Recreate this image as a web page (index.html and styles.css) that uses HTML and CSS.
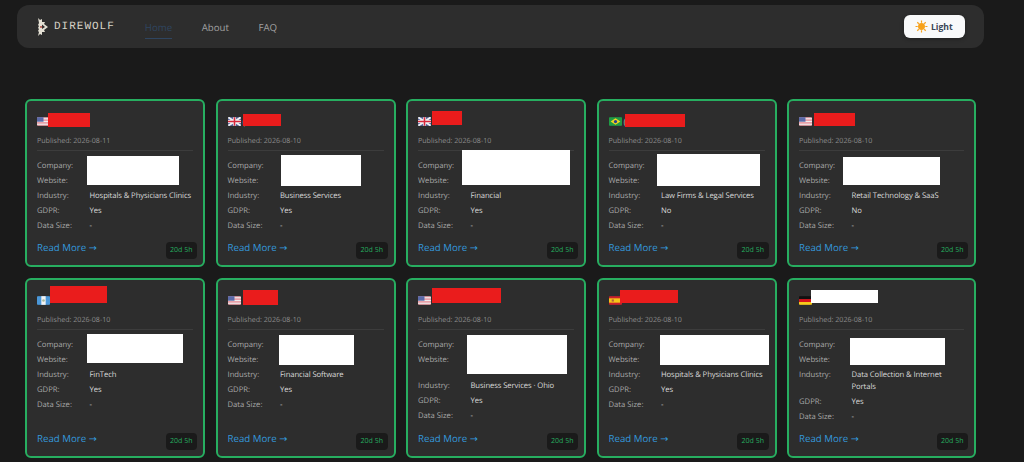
FILE: index.html
```html
<!DOCTYPE html>
<html lang="en">
<head>
  <meta charset="UTF-8">
  <meta name="viewport" content="width=device-width, initial-scale=1.0">
  <title>Direwolf</title>
  <link rel="stylesheet" href="styles.css">
</head>
<body>

  <!-- flags, reused by every card -->
  <svg class="defs" aria-hidden="true">
    <symbol id="flag-us" viewBox="0 0 12 8">
      <rect width="12" height="8" fill="#e8a0a8"/>
      <path d="M0 1.5h12M0 4h12M0 6.5h12" stroke="#eee" stroke-width="1"/>
      <rect width="6" height="4.2" fill="#5a6aa8"/>
    </symbol>
    <symbol id="flag-gb" viewBox="0 0 12 8">
      <rect width="12" height="8" fill="#5a6aa0"/>
      <path d="M0 0l12 8M12 0L0 8" stroke="#f2f2f2" stroke-width="1.8"/>
      <path d="M6 0v8M0 4h12" stroke="#f2f2f2" stroke-width="2.6"/>
      <path d="M6 0v8M0 4h12" stroke="#d8283c" stroke-width="1.4"/>
    </symbol>
    <symbol id="flag-br" viewBox="0 0 12 8">
      <rect width="12" height="8" fill="#1f9a45"/>
      <path d="M6 1l4.5 3L6 7 1.500 4z" fill="#f4d21f"/>
      <circle cx="6" cy="4" r="1.500" fill="#26408f"/>
    </symbol>
    <symbol id="flag-gt" viewBox="0 0 12 8">
      <rect width="12" height="8" fill="#4a97d8"/>
      <rect x="4" width="4" height="8" fill="#f2f2f2"/>
      <circle cx="6" cy="4" r="1.200" fill="#a8b89a"/>
    </symbol>
    <symbol id="flag-es" viewBox="0 0 12 8">
      <rect width="12" height="8" fill="#c8202c"/>
      <rect y="2" width="12" height="4" fill="#f5c518"/>
      <rect x="2.500" y="3" width="2" height="2" fill="#b5603a"/>
    </symbol>
    <symbol id="flag-de" viewBox="0 0 12 8">
      <rect width="12" height="2.700" fill="#111"/>
      <rect y="2.700" width="12" height="2.700" fill="#d8141c"/>
      <rect y="5.400" width="12" height="2.600" fill="#f7cc1c"/>
    </symbol>
  </svg>

  <nav class="navbar">
    <a href="#none" class="brand">
      <svg class="brand-mark" viewBox="0 0 11 18" aria-hidden="true">
        <path d="M1 0l2 2 2-1 0 3 3 0-1 2 4 3-4 3 1 2-3 0 0 3-2-1-2 2 1-4-1-1 1-2-1-1 1-2-1-1 1-2z" fill="#e4e0d4"/>
        <path d="M5 6.500l3 2.500-3 2z" fill="#2d2d2d"/>
        <rect x="3" y="8.200" width="2.200" height="1.500" fill="#b0483f"/>
      </svg>
      <span>DIREWOLF</span>
    </a>
    <ul class="nav-links">
      <li><a href="#none" class="nav-link active">Home</a></li>
      <li><a href="#none" class="nav-link">About</a></li>
      <li><a href="#none" class="nav-link">FAQ</a></li>
    </ul>
    <button type="button" class="theme-toggle">
      <svg class="sun" viewBox="0 0 12 12" aria-hidden="true">
        <circle cx="6" cy="6" r="3.200" fill="#f7a21b"/>
        <path d="M6 .5v2M6 9.500v2M.5 6h2M9.500 6h2M2.100 2.100l1.400 1.400M8.500 8.500l1.400 1.400M2.100 9.900l1.400-1.400M8.500 3.500l1.400-1.400" stroke="#f7a21b" stroke-width="1.100"/>
      </svg>
      Light
    </button>
  </nav>

  <main class="card-grid">

    <article class="card">
      <h2 class="card-title"><svg class="flag"><use href="#flag-us"/></svg></h2>
      <p class="published">Published: 2026-08-11</p>
      <div class="info-row"><span class="info-label">Company:</span></div>
      <div class="info-row"><span class="info-label">Website:</span></div>
      <div class="info-row"><span class="info-label">Industry:</span><span class="info-value">Hospitals &amp; Physicians Clinics</span></div>
      <div class="info-row"><span class="info-label">GDPR:</span><span class="info-value">Yes</span></div>
      <div class="info-row"><span class="info-label">Data Size:</span><span class="info-value">-</span></div>
      <a href="#none" class="read-more">Read More →</a>
      <span class="timer">20d 5h</span>
      <div class="redact red name-a1"></div>
      <div class="redact info-a1"></div>
    </article>

    <article class="card">
      <h2 class="card-title"><svg class="flag"><use href="#flag-gb"/></svg>(</h2>
      <p class="published">Published: 2026-08-10</p>
      <div class="info-row"><span class="info-label">Company:</span></div>
      <div class="info-row"><span class="info-label">Website:</span></div>
      <div class="info-row"><span class="info-label">Industry:</span><span class="info-value">Business Services</span></div>
      <div class="info-row"><span class="info-label">GDPR:</span><span class="info-value">Yes</span></div>
      <div class="info-row"><span class="info-label">Data Size:</span><span class="info-value">-</span></div>
      <a href="#none" class="read-more">Read More →</a>
      <span class="timer">20d 5h</span>
      <div class="redact red name-a2"></div>
      <div class="redact info-a2"></div>
    </article>

    <article class="card">
      <h2 class="card-title"><svg class="flag"><use href="#flag-gb"/></svg></h2>
      <p class="published">Published: 2026-08-10</p>
      <div class="info-row"><span class="info-label">Company:</span></div>
      <div class="info-row"><span class="info-label">Website:</span></div>
      <div class="info-row"><span class="info-label">Industry:</span><span class="info-value">Financial</span></div>
      <div class="info-row"><span class="info-label">GDPR:</span><span class="info-value">Yes</span></div>
      <div class="info-row"><span class="info-label">Data Size:</span><span class="info-value">-</span></div>
      <a href="#none" class="read-more">Read More →</a>
      <span class="timer">20d 5h</span>
      <div class="redact red name-a3"></div>
      <div class="redact info-a3"></div>
    </article>

    <article class="card">
      <h2 class="card-title"><svg class="flag"><use href="#flag-br"/></svg>(</h2>
      <p class="published">Published: 2026-08-10</p>
      <div class="info-row"><span class="info-label">Company:</span></div>
      <div class="info-row"><span class="info-label">Website:</span></div>
      <div class="info-row"><span class="info-label">Industry:</span><span class="info-value">Law Firms &amp; Legal Services</span></div>
      <div class="info-row"><span class="info-label">GDPR:</span><span class="info-value">No</span></div>
      <div class="info-row"><span class="info-label">Data Size:</span><span class="info-value">-</span></div>
      <a href="#none" class="read-more">Read More →</a>
      <span class="timer">20d 5h</span>
      <div class="redact red name-a4"></div>
      <div class="redact info-a4"></div>
    </article>

    <article class="card">
      <h2 class="card-title"><svg class="flag"><use href="#flag-us"/></svg></h2>
      <p class="published">Published: 2026-08-10</p>
      <div class="info-row"><span class="info-label">Company:</span></div>
      <div class="info-row"><span class="info-label">Website:</span></div>
      <div class="info-row"><span class="info-label">Industry:</span><span class="info-value">Retail Technology &amp; SaaS</span></div>
      <div class="info-row"><span class="info-label">GDPR:</span><span class="info-value">No</span></div>
      <div class="info-row"><span class="info-label">Data Size:</span><span class="info-value">-</span></div>
      <a href="#none" class="read-more">Read More →</a>
      <span class="timer">20d 5h</span>
      <div class="redact red name-a5"></div>
      <div class="redact info-a5"></div>
    </article>

    <article class="card">
      <h2 class="card-title"><svg class="flag"><use href="#flag-gt"/></svg></h2>
      <p class="published">Published: 2026-08-10</p>
      <div class="info-row"><span class="info-label">Company:</span></div>
      <div class="info-row"><span class="info-label">Website:</span></div>
      <div class="info-row"><span class="info-label">Industry:</span><span class="info-value">FinTech</span></div>
      <div class="info-row"><span class="info-label">GDPR:</span><span class="info-value">Yes</span></div>
      <div class="info-row"><span class="info-label">Data Size:</span><span class="info-value">-</span></div>
      <a href="#none" class="read-more">Read More →</a>
      <span class="timer">20d 5h</span>
      <div class="redact red name-b1"></div>
      <div class="redact info-b1"></div>
    </article>

    <article class="card">
      <h2 class="card-title"><svg class="flag"><use href="#flag-us"/></svg></h2>
      <p class="published">Published: 2026-08-10</p>
      <div class="info-row"><span class="info-label">Company:</span></div>
      <div class="info-row"><span class="info-label">Website:</span></div>
      <div class="info-row"><span class="info-label">Industry:</span><span class="info-value">Financial Software</span></div>
      <div class="info-row"><span class="info-label">GDPR:</span><span class="info-value">Yes</span></div>
      <div class="info-row"><span class="info-label">Data Size:</span><span class="info-value">-</span></div>
      <a href="#none" class="read-more">Read More →</a>
      <span class="timer">20d 5h</span>
      <div class="redact red name-b2"></div>
      <div class="redact info-b2"></div>
    </article>

    <article class="card">
      <h2 class="card-title"><svg class="flag"><use href="#flag-us"/></svg></h2>
      <p class="published">Published: 2026-08-10</p>
      <div class="info-row"><span class="info-label">Company:</span></div>
      <div class="info-row tall"><span class="info-label">Website:</span></div>
      <div class="info-row"><span class="info-label">Industry:</span><span class="info-value">Business Services · Ohio</span></div>
      <div class="info-row"><span class="info-label">GDPR:</span><span class="info-value">Yes</span></div>
      <div class="info-row"><span class="info-label">Data Size:</span><span class="info-value">-</span></div>
      <a href="#none" class="read-more">Read More →</a>
      <span class="timer">20d 5h</span>
      <div class="redact red name-b3"></div>
      <div class="redact info-b3"></div>
    </article>

    <article class="card">
      <h2 class="card-title"><svg class="flag"><use href="#flag-es"/></svg></h2>
      <p class="published">Published: 2026-08-10</p>
      <div class="info-row"><span class="info-label">Company:</span></div>
      <div class="info-row"><span class="info-label">Website:</span></div>
      <div class="info-row"><span class="info-label">Industry:</span><span class="info-value">Hospitals &amp; Physicians Clinics</span></div>
      <div class="info-row"><span class="info-label">GDPR:</span><span class="info-value">Yes</span></div>
      <div class="info-row"><span class="info-label">Data Size:</span><span class="info-value">-</span></div>
      <a href="#none" class="read-more">Read More →</a>
      <span class="timer">20d 5h</span>
      <div class="redact red name-b4"></div>
      <div class="redact info-b4"></div>
    </article>

    <article class="card">
      <h2 class="card-title"><svg class="flag"><use href="#flag-de"/></svg></h2>
      <p class="published">Published: 2026-08-10</p>
      <div class="info-row"><span class="info-label">Company:</span></div>
      <div class="info-row"><span class="info-label">Website:</span></div>
      <div class="info-row"><span class="info-label">Industry:</span><span class="info-value">Data Collection &amp; Internet Portals</span></div>
      <div class="info-row"><span class="info-label">GDPR:</span><span class="info-value">Yes</span></div>
      <div class="info-row"><span class="info-label">Data Size:</span><span class="info-value">-</span></div>
      <a href="#none" class="read-more">Read More →</a>
      <span class="timer">20d 5h</span>
      <div class="redact name-b5"></div>
      <div class="redact info-b5"></div>
    </article>

  </main>

</body>
</html>
```

FILE: styles.css
```css
* {
  box-sizing: border-box;
}

body {
  margin: 0;
  height: 462px;
  overflow: hidden;
  background: #1a1a1a;
  color: #ddd;
  font-family: "Open Sans", "Noto Sans", sans-serif;
  text-rendering: geometricPrecision;
}

.defs {
  display: none;
}

a {
  text-decoration: none;
}

/* navbar */
.navbar {
  display: flex;
  align-items: center;
  height: 43px;
  margin: 5px 40px 0 17px;
  padding: 0 19px 0 20px;
  background: #2d2d2d;
  border-radius: 12px;
}

.brand {
  display: flex;
  align-items: center;
  gap: 6px;
  color: #d8d4c8;
  font-family: "Liberation Mono", monospace;
  font-size: 11px;
  letter-spacing: 1px;
}

.brand-mark {
  width: 11px;
  height: 18px;
}

.nav-links {
  display: flex;
  gap: 29.500px;
  list-style: none;
  margin: 2px 0 0 30px;
  padding: 0;
}

.nav-link {
  display: block;
  padding: 4px 0;
  color: #a0a0a0;
  font-size: 9.700px;
  border-bottom: 1px solid transparent;
}

.nav-link.active {
  color: #2f4560;
  border-bottom-color: #2f4560;
}

.theme-toggle {
  display: flex;
  align-items: center;
  gap: 3px;
  width: 61px;
  height: 23px;
  margin-left: auto;
  padding: 0 0 0 11px;
  border: 0;
  border-radius: 6px;
  background: #f8f9fa;
  color: #3a4556;
  font-family: "Open Sans", sans-serif;
  font-size: 8.600px;
  font-weight: 700;
  box-shadow: 0 1px 4px rgba(0, 0, 0, 0.3);
}

.sun {
  width: 13px;
  height: 13px;
}

/* cards */
.card-grid {
  display: grid;
  grid-template-columns: repeat(4, 180px) 189px;
  grid-template-rows: 168px 180px;
  column-gap: 10.500px;
  row-gap: 11px;
  padding: 51px 0 0 25px;
}

.card {
  position: relative;
  display: flex;
  flex-direction: column;
  padding: 11px 10px 0;
  background: #2d2d2d;
  border: 2px solid #27ae60;
  border-radius: 6px;
}

.card-title {
  display: flex;
  align-items: center;
  gap: 2px;
  height: 18px;
  margin: 0;
  color: #aaa;
  font-size: 9px;
  font-weight: 400;
}

.flag {
  width: 13px;
  height: 9px;
  border-radius: 1px;
}

.published {
  height: 17px;
  margin: 4px 0 7px;
  padding-top: 2px;
  color: #8c8c8c;
  font-size: 7.100px;
  line-height: 11px;
  border-bottom: 1px solid #3c3c3c;
}

.info-row {
  display: flex;
  min-height: 15px;
  margin-right: -3px;
  font-size: 7.700px;
  letter-spacing: -0.100px;
  line-height: 12px;
  padding: 1.500px 0;
}

.info-row.tall {
  min-height: 26px;
}

.info-label {
  flex: 0 0 52.500px;
  color: #a8a8a8;
  letter-spacing: 0;
}

.info-value {
  color: #d8d8d8;
}

.read-more {
  margin-top: auto;
  margin-bottom: 10.500px;
  color: #3498db;
  font-family: "Open Sans", "DejaVu Sans", sans-serif;
  font-size: 9.700px;
  line-height: 15px;
}

.timer {
  position: absolute;
  right: 6px;
  bottom: 6px;
  padding: 0 4.500px;
  height: 17px;
  background: #1a1a1a;
  border-radius: 4px;
  color: #27ae60;
  font-size: 7px;
  line-height: 18px;
}

/* redaction blocks painted over the names and company details */
.redact {
  position: absolute;
  background: #fff;
}

.redact.red {
  background: #ea1c1c;
}

.name-a1 { left: 21px; top: 12px; width: 42px; height: 14px; }
.info-a1 { left: 59.500px; top: 55px; width: 92.500px; height: 29px; }
.name-a2 { left: 25.500px; top: 13px; width: 38px; height: 12px; }
.info-a2 { left: 63px; top: 54px; width: 80.500px; height: 31px; }
.name-a3 { left: 24px; top: 10px; width: 30px; height: 14px; }
.info-a3 { left: 54px; top: 49px; width: 108px; height: 35px; }
.name-a4 { left: 26px; top: 13px; width: 60px; height: 13px; }
.info-a4 { left: 58.500px; top: 53px; width: 103px; height: 32px; }
.name-a5 { left: 25px; top: 12px; width: 41px; height: 13px; }
.info-a5 { left: 54px; top: 56px; width: 97px; height: 28px; }

.name-b1 { left: 23px; top: 6px; width: 57px; height: 17px; }
.info-b1 { left: 60px; top: 54px; width: 96px; height: 29px; }
.name-b2 { left: 25.500px; top: 10px; width: 35px; height: 15px; }
.info-b2 { left: 61.500px; top: 55px; width: 75px; height: 30px; }
.name-b3 { left: 24px; top: 8px; width: 69px; height: 15px; }
.info-b3 { left: 59px; top: 55px; width: 100px; height: 39px; }
.name-b4 { left: 21.500px; top: 10px; width: 58px; height: 13px; }
.info-b4 { left: 61px; top: 55px; width: 109px; height: 30px; }
.name-b5 { left: 22px; top: 10px; width: 67px; height: 13px; }
.info-b5 { left: 61px; top: 58px; width: 95px; height: 27px; }
```
